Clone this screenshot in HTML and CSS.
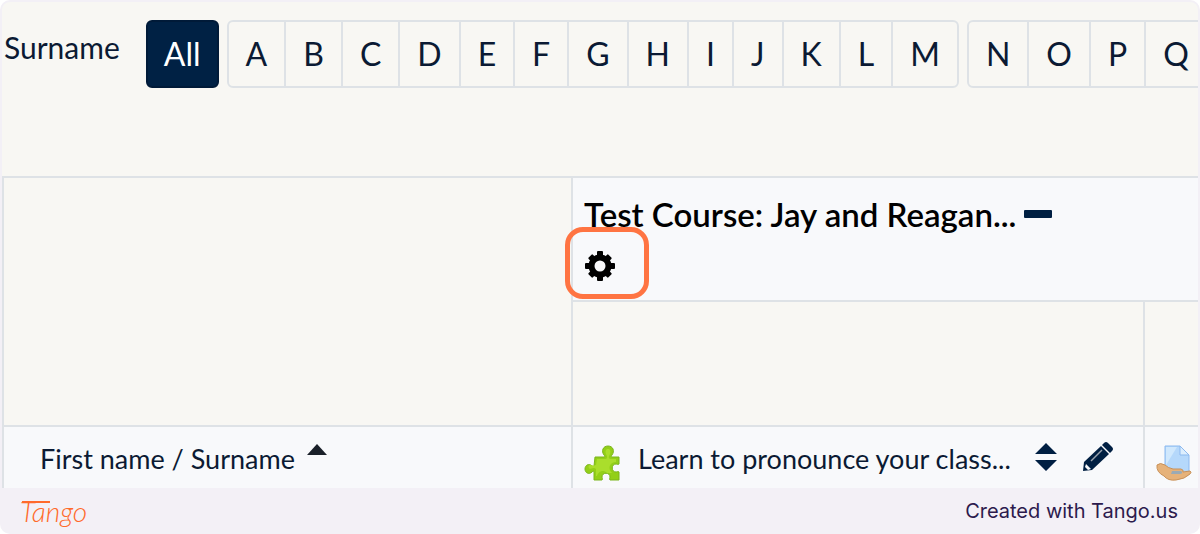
FILE: index.html
```html
<!DOCTYPE html>
<html lang="en">
<head>
  <meta charset="UTF-8" />
  <meta name="viewport" content="width=device-width, initial-scale=1.0"/>
  <title>Grader report</title>
  <link rel="stylesheet" href="styles.css">
</head>
<body>
  <div class="frame">
    <main class="screen">
      <nav class="initials" aria-label="Surname">
        <span class="initials-label">Surname</span>
        <ul class="pages">
          <li class="active"><a href="#">All</a></li>
        </ul>
        <ul class="pages">
          <li><a href="#">A</a></li>
          <li><a href="#">B</a></li>
          <li><a href="#">C</a></li>
          <li><a href="#">D</a></li>
          <li><a href="#">E</a></li>
          <li><a href="#">F</a></li>
          <li><a href="#">G</a></li>
          <li><a href="#">H</a></li>
          <li><a href="#">I</a></li>
          <li><a href="#">J</a></li>
          <li><a href="#">K</a></li>
          <li><a href="#">L</a></li>
          <li><a href="#">M</a></li>
        </ul>
        <ul class="pages">
          <li><a href="#">N</a></li>
          <li><a href="#">O</a></li>
          <li><a href="#">P</a></li>
          <li><a href="#">Q</a></li>
        </ul>
      </nav>

      <table class="grades">
        <colgroup>
          <col class="col-name">
          <col class="col-item">
          <col>
        </colgroup>
        <tr class="row-course">
          <td rowspan="2"></td>
          <th class="shaded" colspan="2">
            <div class="course">
              <a href="#">Test Course: Jay and Reagan...</a>
              <button type="button" class="icon-btn" aria-label="Collapse">
                <svg width="28" height="8" viewBox="0 0 28 8"><rect width="28" height="8" rx="1" fill="#001f42"/></svg>
              </button>
            </div>
            <button type="button" class="icon-btn gear" aria-label="Settings">
              <svg width="32" height="32" viewBox="0 0 32 32">
                <g fill="#000">
                  <rect x="13" y="1" width="6" height="30" rx="1"/>
                  <rect x="13" y="2" width="6" height="28" rx="1" transform="rotate(45 16 16)"/>
                  <rect x="13" y="1" width="6" height="30" rx="1" transform="rotate(90 16 16)"/>
                  <rect x="13" y="2" width="6" height="28" rx="1" transform="rotate(135 16 16)"/>
                  <circle cx="16" cy="16" r="11.500"/>
                </g>
                <circle cx="16" cy="16" r="5.500" fill="#f8f9fb"/>
              </svg>
            </button>
          </th>
        </tr>
        <tr class="row-empty">
          <td></td>
          <td></td>
        </tr>
        <tr class="row-items">
          <th class="shaded">
            <div class="name">
              <span><a href="#">First name</a> / <a href="#">Surname</a></span>
              <svg class="sorted" width="20" height="11" viewBox="0 0 20 11"><path d="M10 0L20 11H0z" fill="#1a2029"/></svg>
            </div>
          </th>
          <th class="shaded">
            <div class="item">
              <svg class="activity" width="36" height="36" viewBox="0 0 36 36">
                <path d="M11 12h9c1 0 1-1 0-2-3-4-1-9 4-9s7 5 4 9c-1 1-1 2 0 2h7v7c-1 1-2 0-3 0-5 0-5 8 0 8 1 0 2-1 3 0v8h-9c-1-1 0-2 0-3 0-5-8-5-8 0 0 1 1 2 0 3h-8v-8c0-1-1-1-2 0-3 3-7 1-7-3s4-6 7-3c1 1 2 1 2 0z" fill="#93cf18" stroke="#7ab51d" stroke-width="1"/>
                <path d="M13 14h9c2-1 1-3 0-5-1-3 0-5 2-5s3 2 2 5c-1 2-2 4 0 5h6v3c-6 0-9 6-4 11h-5c-4-4-9-1-10 3h-1v-7c-2-2-5 0-6 0-2-1-2-4 0-4s4 1 6 0z" fill="#aade2c"/>
              </svg>
              <a href="#">Learn to pronounce your class...</a>
              <button type="button" class="icon-btn sort" aria-label="Sort">
                <svg width="22" height="28" viewBox="0 0 22 28"><path d="M11 0L22 11H0zM0 17h22L11 28z" fill="#001f42"/></svg>
              </button>
              <button type="button" class="icon-btn" aria-label="Edit">
                <svg width="30" height="30" viewBox="0 0 30 30">
                  <path d="M0 29l1-9L18 4l8 8L9 28zM19 3l2-2q2-2 4 0l4 4q2 2 0 4l-2 2z" fill="#001f42"/>
                  <path d="M3 22l5 5-3 1-3-3z" fill="#f8f9fb"/>
                  <path d="M8 19L19 8" stroke="#9aa3ae" stroke-width="1.500"/>
                </svg>
              </button>
            </div>
          </th>
          <th class="shaded">
            <div class="item">
              <svg class="activity" width="36" height="36" viewBox="0 0 36 36">
                <path d="M9 1h15l9 9v18H9z" fill="#b5d8fb" stroke="#8cb9ef" stroke-width="1"/>
                <path d="M10 2h11L10 20z" fill="#d0e8fd"/>
                <path d="M24 1v9h9z" fill="#dceefe" stroke="#8cb9ef" stroke-width="1"/>
                <path d="M1 20q3-3 8 0 3 3 8 4h8q3 1 2 3l7-1q2 1 0 3-5 5-14 6-8 1-12-4-8-4-7-11z" fill="#e6b27a" stroke="#c99158" stroke-width="1"/>
                <path d="M16 26h9q3 2-1 3h-9z" fill="#9baab5"/>
              </svg>
            </div>
          </th>
        </tr>
      </table>
    </main>

    <footer class="footer">
      <a class="logo" href="#">Tango</a>
      <span>Created with Tango.us</span>
    </footer>
  </div>
</body>
</html>
```

FILE: styles.css
```css
* {
  box-sizing: border-box;
}
body {
  margin: 0;
  background: #fff;
  color: #0b1a33;
  font-family: Lato, "Liberation Sans", sans-serif;
  font-size: 30px;
  line-height: 36px;
}
a {
  color: inherit;
  text-decoration: none;
}
.frame {
  padding: 2px 2px 0;
  background: #f3f0f6;
  border-radius: 10px;
  overflow: hidden;
}
.screen {
  background: #f8f7f3;
  border-radius: 8px 8px 0 0;
  overflow: hidden;
}

/* initials bar */
.initials {
  display: flex;
  align-items: flex-start;
  gap: 8px;
  padding: 18px 0 88px 2px;
}
.initials-label {
  margin-right: 18px;
  padding-top: 9px;
}
.pages {
  display: flex;
  flex-shrink: 0;
  margin: 0;
  padding: 0;
  list-style: none;
  border: 2px solid #dee2e6;
  border-radius: 6px;
}
.pages li + li {
  border-left: 2px solid #dee2e6;
}
.pages a {
  display: block;
  padding: 14px 17px;
  font-size: 32px;
}
.pages:has(.active) {
  background: #002144;
  border-color: #001a38;
  color: #fff;
}
.pages .active a {
  padding: 14px 16px;
}

/* grades table */
.grades {
  width: 100%;
  table-layout: fixed;
  border-spacing: 0;
}
.col-name {
  width: 569px;
}
.col-item {
  width: 572px;
}
.grades td,
.grades th {
  padding: 0 0 0 11px;
  border: solid #dee2e6;
  border-width: 2px 0 0 2px;
  font-weight: 400;
  text-align: left;
  vertical-align: top;
}
.grades .shaded {
  background: #f8f9fb;
}
.row-course {
  height: 124px;
}
.row-empty {
  height: 125px;
}
.row-items {
  height: 63px;
  font-size: 27px;
}
.icon-btn {
  display: flex;
  flex-shrink: 0;
  padding: 0;
  border: 0;
  background: none;
  cursor: pointer;
}
.course {
  display: flex;
  align-items: center;
  gap: 8px;
  padding-top: 18px;
  color: #000;
}
.course a {
  font-size: 33px;
  font-weight: 600;
}
.gear {
  position: relative;
  margin-top: 18px;
}
.gear::after {
  content: "";
  position: absolute;
  inset: -23px -33px -17px -19px;
  border: 5px solid #ff7442;
  border-radius: 18px;
}
.name {
  display: flex;
  gap: 12px;
  padding: 14px 0 0 25px;
}
.sorted {
  margin-top: 3px;
}
.item {
  display: flex;
  align-items: center;
  gap: 18px;
  height: 60px;
}
.item a {
  padding-top: 4px;
  white-space: nowrap;
}
.activity {
  flex-shrink: 0;
  margin-top: 12px;
}
.item .sort {
  margin: 0 8px 0 6px;
}

/* footer */
.footer {
  display: flex;
  justify-content: space-between;
  align-items: center;
  height: 46px;
  padding: 0 20px 0 18px;
  color: #2c1a4d;
  font-family: Inter, "Liberation Sans", sans-serif;
  font-size: 20px;
}
.logo {
  position: relative;
  color: #ff6a2b;
  font-family: Lato, sans-serif;
  font-size: 28px;
  font-style: italic;
  font-weight: 300;
}
/* long cross stroke over the wordmark */
.logo::before {
  content: "";
  position: absolute;
  top: 8px;
  left: 2px;
  width: 28px;
  height: 2px;
  background: #ff6a2b;
}
```
